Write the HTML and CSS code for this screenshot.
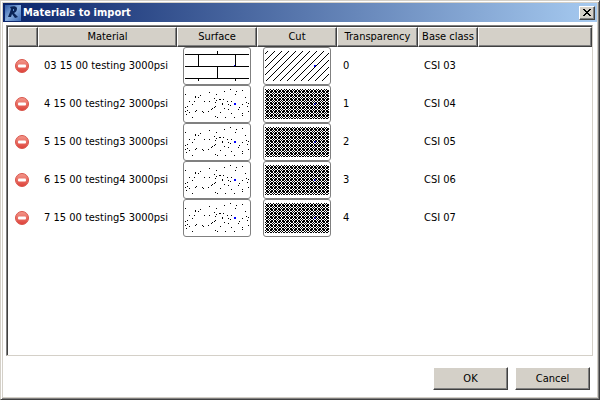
FILE: index.html
```html
<!DOCTYPE html>
<html lang="en">
<head>
<meta charset="utf-8">
<title>Materials to import</title>
<link rel="stylesheet" href="styles.css">
</head>
<body>
<svg class="defs" aria-hidden="true">
  <defs>
    <linearGradient id="red" x1="0" y1="0" x2="0" y2="1"><stop offset="0" stop-color="#f49a8e"/><stop offset="1" stop-color="#dd4038"/></linearGradient>
    <linearGradient id="blue" x1="0" y1="0" x2="1" y2="1"><stop offset="0" stop-color="#2f5ba6"/><stop offset=".5" stop-color="#86abdd"/><stop offset="1" stop-color="#3f6cb4"/></linearGradient>
    <pattern id="hatch" width="7" height="7" patternUnits="userSpaceOnUse">
      <path d="M2 0h1v1h-1zM1 1h1v1h-1zM0 2h1v1h-1zM6 3h1v1h-1zM5 4h1v1h-1zM4 5h1v1h-1zM3 6h1v1h-1z"/>
    </pattern>
    <pattern id="weave" width="8" height="8" patternUnits="userSpaceOnUse">
      <path d="M0 0h1v1h-1zM3 0h1v1h-1zM5 0h1v1h-1zM1 1h2v1h-2zM4 1h1v1h-1zM6 1h2v1h-2zM1 2h3v1h-3zM5 2h3v1h-3zM0 3h1v1h-1zM2 3h2v1h-2zM5 3h2v1h-2zM1 4h1v1h-1zM4 4h1v1h-1zM7 4h1v1h-1zM0 5h1v1h-1zM2 5h2v1h-2zM5 5h2v1h-2zM1 6h3v1h-3zM5 6h3v1h-3zM1 7h2v1h-2zM4 7h1v1h-1zM6 7h2v1h-2z"/>
    </pattern>
    <symbol id="remove" viewBox="0 0 14 14">
      <circle cx="7" cy="7" r="6.5" fill="url(#red)" stroke="#d8564c"/>
      <rect x="3" y="5.5" width="8" height="3" rx="1" fill="#fff"/>
    </symbol>
    <symbol id="brick" viewBox="0 0 64 30">
      <path d="M0 3h64v1H0zM0 15h64v1H0zM0 27h64v1H0zM32 0h1v3h-1zM13 4h1v11h-1zM50 4h1v11h-1zM32 16h1v11h-1zM13 28h1v2h-1zM50 28h1v2h-1z"/>
      <path fill="#00f" d="M49 14h1v1h-1z"/>
    </symbol>
    <symbol id="diagonal" viewBox="0 0 64 30">
      <rect width="64" height="30" fill="url(#hatch)"/>
      <path fill="#00f" d="M49 14h2v1h-1v1h-1z"/>
    </symbol>
    <symbol id="sand" viewBox="0 0 64 30">
      <path transform="translate(0 .5)" stroke="#000" d="M45 0h1M39 2h1M51 2h1M57 1h1M0 5h1M10 7h1M13 8h1M15 6h1M24 3h1M31 5h1M29 9h1M31 11h1M34 10h2M38 10h1M50 5h1M60 8h1M46 12h1M42 12h1M4 12h1M10 8h1M19 12h1M24 12h1M9 12h1M0 18h1M2 17h1M7 15h1M30 13h1M30 17h1M37 14h1M37 15h1M39 19h1M43 15h1M45 16h1M43 20h1M53 20h1M57 15h1M54 18h1M61 13h1M63 14h1M62 17h1M63 22h1M0 22h1M2 21h1M4 23h1M11 21h1M10 22h1M17 22h1M23 22h1M18 23h1M27 19h1M26 20h1M29 18h1M30 27h1M32 28h1M35 23h1M40 28h1M46 24h1M49 28h1M57 24h1M57 26h1M7 28h1M1 25h1"/>
      <path fill="#00f" d="M49 14h2v2h-2z"/>
    </symbol>
    <symbol id="dense" viewBox="0 0 64 30">
      <rect width="64" height="30" fill="url(#weave)"/>
      <path fill="#00f" d="M50 14h1v1h-1zM49 15h1v1h-1z"/>
    </symbol>
  </defs>
</svg>
<main class="window">
  <header class="titlebar">
    <svg class="logo" viewBox="0 0 16 16" aria-hidden="true">
      <rect width="16" height="16" fill="url(#blue)"/>
      <path fill="#0c2557" d="M5 2C8 1 11 1 12 3C12 6 11 7 9 8L13 12L10 13L7 9L6 12L3 12L5 7L6 4Z"/>
      <path fill="#5f8ccb" d="M8 4h1v2h-1z"/>
    </svg>
    <h1 class="title">Materials to import</h1>
    <button class="close" type="button" aria-label="Close">
      <svg width="8" height="7" viewBox="0 0 8 7" aria-hidden="true"><path d="M0 0h2v1h1v1h2v-1h1v-1h2v1h-1v1h-1v1h-1v1h1v1h1v1h1v1h-2v-1h-1v-1h-2v1h-1v1h-2v-1h1v-1h1v-1h1v-1h-1v-1h-1v-1h-1z"/></svg>
    </button>
  </header>
  <div class="content">
    <div class="list">
      <table class="materials">
        <colgroup><col class="c-remove"><col class="c-name"><col class="c-swatch"><col class="c-swatch"><col class="c-transparency"><col class="c-class"><col></colgroup>
        <thead>
          <tr><th></th><th>Material</th><th>Surface</th><th>Cut</th><th>Transparency</th><th>Base class</th><th></th></tr>
        </thead>
        <tbody>
          <tr>
            <td><button class="remove" type="button" aria-label="Remove"><svg><use href="#remove"/></svg></button></td>
            <td>03 15 00 testing 3000psi</td>
            <td><button class="swatch" type="button" aria-label="Surface pattern"><svg><use href="#brick"/></svg></button></td>
            <td><button class="swatch" type="button" aria-label="Cut pattern"><svg><use href="#diagonal"/></svg></button></td>
            <td>0</td><td>CSI 03</td><td></td>
          </tr>
          <tr>
            <td><button class="remove" type="button" aria-label="Remove"><svg><use href="#remove"/></svg></button></td>
            <td>4 15 00 testing2 3000psi</td>
            <td><button class="swatch" type="button" aria-label="Surface pattern"><svg><use href="#sand"/></svg></button></td>
            <td><button class="swatch" type="button" aria-label="Cut pattern"><svg><use href="#dense"/></svg></button></td>
            <td>1</td><td>CSI 04</td><td></td>
          </tr>
          <tr>
            <td><button class="remove" type="button" aria-label="Remove"><svg><use href="#remove"/></svg></button></td>
            <td>5 15 00 testing3 3000psi</td>
            <td><button class="swatch" type="button" aria-label="Surface pattern"><svg><use href="#sand"/></svg></button></td>
            <td><button class="swatch" type="button" aria-label="Cut pattern"><svg><use href="#dense"/></svg></button></td>
            <td>2</td><td>CSI 05</td><td></td>
          </tr>
          <tr>
            <td><button class="remove" type="button" aria-label="Remove"><svg><use href="#remove"/></svg></button></td>
            <td>6 15 00 testing4 3000psi</td>
            <td><button class="swatch" type="button" aria-label="Surface pattern"><svg><use href="#sand"/></svg></button></td>
            <td><button class="swatch" type="button" aria-label="Cut pattern"><svg><use href="#dense"/></svg></button></td>
            <td>3</td><td>CSI 06</td><td></td>
          </tr>
          <tr>
            <td><button class="remove" type="button" aria-label="Remove"><svg><use href="#remove"/></svg></button></td>
            <td>7 15 00 testing5 3000psi</td>
            <td><button class="swatch" type="button" aria-label="Surface pattern"><svg><use href="#sand"/></svg></button></td>
            <td><button class="swatch" type="button" aria-label="Cut pattern"><svg><use href="#dense"/></svg></button></td>
            <td>4</td><td>CSI 07</td><td></td>
          </tr>
        </tbody>
      </table>
    </div>
    <footer class="actions">
      <button class="action" type="button">OK</button>
      <button class="action" type="button">Cancel</button>
    </footer>
  </div>
</main>
</body>
</html>
```
FILE: styles.css
```css
:root {
  --face: #d4d0c8;
  --shadow: #808080;
  --dark: #404040;
}

* {
  box-sizing: border-box;
}

body {
  margin: 0;
  background: #fff;
  color: #000;
  font: 11px/14px Tahoma, "DejaVu Sans Condensed", "DejaVu Sans", sans-serif;
}

button {
  font: inherit;
  color: inherit;
  padding: 0;
}

svg {
  display: block;
}

.defs {
  position: absolute;
  width: 0;
  height: 0;
}

.window {
  display: flex;
  flex-direction: column;
  min-height: 100vh;
  padding: 1px;
  border: 1px solid;
  border-color: var(--face) var(--dark) var(--dark) var(--face);
  background: var(--face);
  box-shadow: inset 1px 1px #fff, inset -1px -1px var(--shadow);
}

.titlebar {
  display: flex;
  align-items: center;
  gap: 2px;
  height: 19px;
  margin: 1px 1px 0;
  padding: 0 2px;
  background: linear-gradient(to right, #0a246a, #a6caf0);
}

.logo {
  width: 16px;
  height: 16px;
}

.title {
  flex: 1;
  margin: 0;
  color: #fff;
  font-size: 11px;
  font-weight: bold;
}

.close {
  display: grid;
  place-items: center;
  width: 16px;
  height: 14px;
  border: 1px solid;
  border-color: #fff var(--dark) var(--dark) #fff;
  background: var(--face);
  box-shadow: inset -1px -1px var(--shadow);
}

.content {
  display: flex;
  flex: 1;
  flex-direction: column;
  gap: 11px;
  margin: 0 1px 1px;
  padding: 3px 4px 7px 3px;
  background: #fff;
}

.list {
  flex: 1;
  padding: 1px 0 0 1px;
  border: 1px solid;
  border-color: var(--shadow) var(--face) var(--face) var(--shadow);
  box-shadow: inset 1px 1px var(--dark);
}

.materials {
  width: 100%;
  table-layout: fixed;
  border-collapse: separate;
  border-spacing: 0;
}

.c-remove { width: 30px; }
.c-name { width: 139px; }
.c-swatch { width: 80px; }
.c-transparency { width: 81px; }
.c-class { width: 60px; }

th {
  height: 20px;
  padding: 0;
  border: 1px solid;
  border-color: #fff var(--dark) var(--dark) #fff;
  background: var(--face);
  box-shadow: inset -1px -1px var(--shadow);
  font-weight: normal;
  white-space: nowrap;
}

td {
  height: 38px;
  padding: 0 6px;
  white-space: nowrap;
}

.remove {
  display: block;
  width: 14px;
  height: 14px;
  margin-left: 1px;
  border: 0;
  background: none;
}

.remove svg {
  width: 14px;
  height: 14px;
}

.swatch {
  display: grid;
  place-items: center;
  width: 68px;
  height: 38px;
  border: 1px solid var(--shadow);
  border-radius: 3px;
  background: #fff;
}

.swatch svg {
  width: 64px;
  height: 30px;
  shape-rendering: crispEdges;
}

.actions {
  display: flex;
  justify-content: flex-end;
  gap: 7px;
  padding-right: 3px;
}

.action {
  width: 75px;
  height: 23px;
  border: 1px solid;
  border-color: #fff var(--dark) var(--dark) #fff;
  background: var(--face);
  box-shadow: inset -1px -1px var(--shadow);
}
```
